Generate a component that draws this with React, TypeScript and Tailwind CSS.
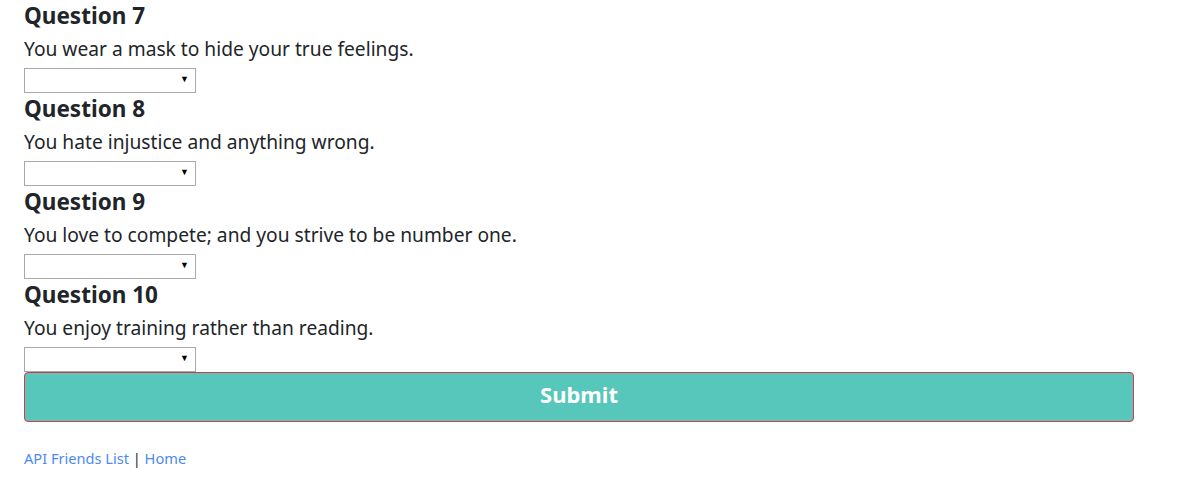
import React from "react";

const questions = [
  { n: 7, text: "You wear a mask to hide your true feelings." },
  { n: 8, text: "You hate injustice and anything wrong." },
  { n: 9, text: "You love to compete; and you strive to be number one." },
  { n: 10, text: "You enjoy training rather than reading." },
];

const Select: React.FC = () => (
  <div className="relative mt-[5px] h-[25px] w-[172px]">
    <select className="h-full w-full appearance-none border border-[#a9a9a9] bg-white outline-none" />
    <span className="pointer-events-none absolute right-[7px] top-[6px] text-[9px] leading-none text-black">
      ▼
    </span>
  </div>
);

const App: React.FC = () => {
  return (
    <div
      className="min-h-[478px] bg-white px-6 text-[#212529]"
      style={{ fontFamily: '"Noto Sans", "Open Sans", sans-serif' }}
    >
      <form className="flex w-[1110px] flex-col">
        {questions.map(q => (
          <div key={q.n} className="flex flex-col">
            <h3 className="h-8 text-[22.5px] font-bold leading-[31px]">Question {q.n}</h3>
            <p className="mt-[3px] h-7 text-[19.2px] leading-7">{q.text}</p>
            <Select />
          </div>
        ))}
        <button
          type="button"
          className="h-[50px] w-full rounded-[4px] border border-[#dc3545] bg-[#57c6bb] pb-[6px] text-[22px] font-bold text-white"
        >
          Submit
        </button>
      </form>
      <div className="mt-[24px] text-[14.6px] leading-6">
        <a href="#" className="text-[#4d8af0]">API Friends List</a> |{" "}
        <a href="#" className="text-[#4d8af0]">Home</a>
      </div>
    </div>
  );
};

export default App;
